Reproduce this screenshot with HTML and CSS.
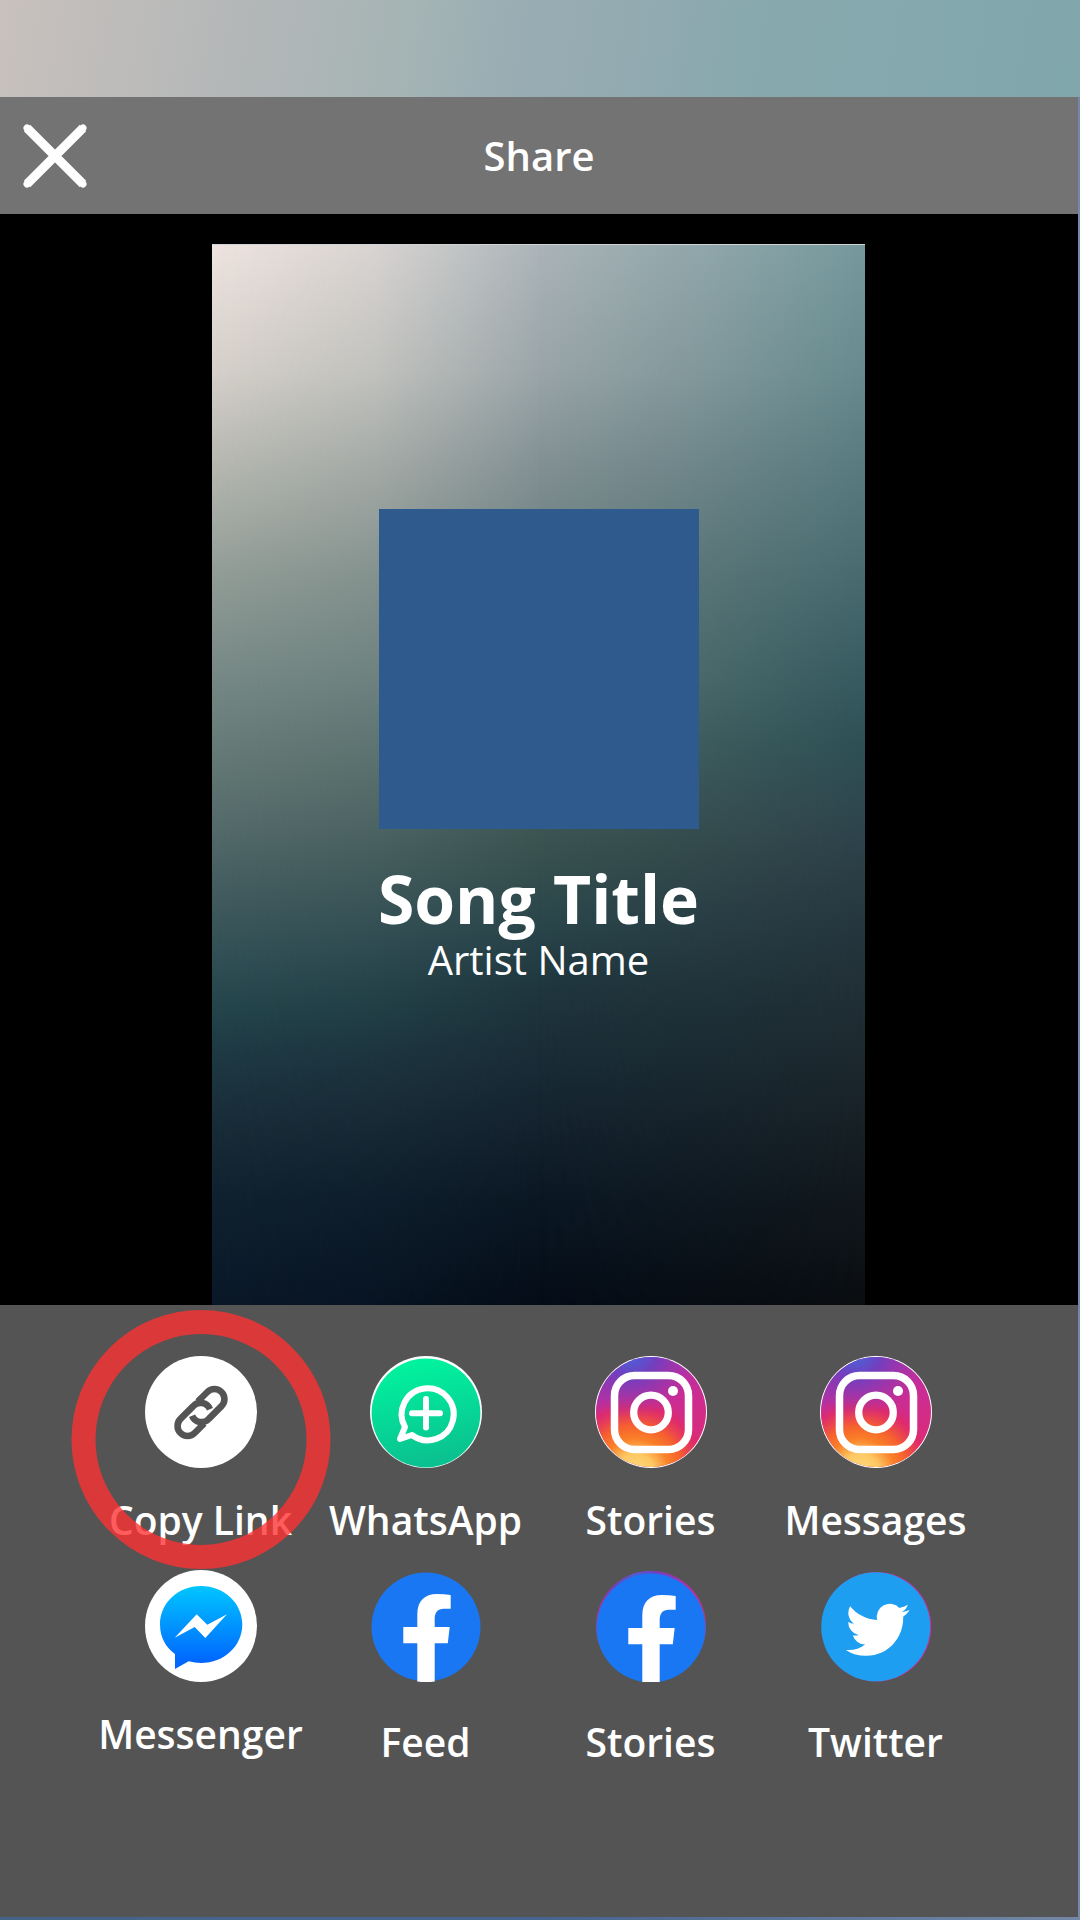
FILE: index.html
```html
<!DOCTYPE html>
<html lang="en">
<head>
<meta charset="utf-8">
<meta name="viewport" content="width=device-width, initial-scale=1">
<title>Share</title>
<link rel="stylesheet" href="styles.css">
</head>
<body>
<svg class="defs" aria-hidden="true">
  <defs>
    <linearGradient id="green" x1="0" y1="0" x2="0.2" y2="1"><stop offset="0" stop-color="#00f8a0"/><stop offset="1" stop-color="#0ac290"/></linearGradient>
    <linearGradient id="sky" x1="0" y1="0" x2="0" y2="1"><stop offset="0" stop-color="#00c6ff"/><stop offset="0.9" stop-color="#0068ff"/></linearGradient>
    <linearGradient id="pink" x1="0.3" y1="0" x2="0.7" y2="1"><stop offset="0" stop-color="#a033b4"/><stop offset="0.5" stop-color="#cb2c93"/><stop offset="1" stop-color="#e02c70"/></linearGradient>
    <radialGradient id="warm" gradientUnits="userSpaceOnUse" cx="40" cy="118" r="84"><stop offset="0" stop-color="#ffdc80"/><stop offset="0.24" stop-color="#fdc863"/><stop offset="0.42" stop-color="#fa8028"/><stop offset="0.58" stop-color="#f6602f"/><stop offset="0.8" stop-color="#e22a66" stop-opacity="0.8"/><stop offset="1" stop-color="#cb2c93" stop-opacity="0"/></radialGradient>
    <radialGradient id="cool" gradientUnits="userSpaceOnUse" cx="36" cy="-4" r="66"><stop offset="0" stop-color="#3f6be0"/><stop offset="0.4" stop-color="#6a40c0" stop-opacity="0.85"/><stop offset="1" stop-color="#9a36a8" stop-opacity="0"/></radialGradient>
    <symbol id="instagram" viewBox="0 0 112 112">
      <circle cx="56" cy="56" r="56" fill="#fff"/>
      <circle cx="56" cy="56" r="55" fill="url(#pink)"/>
      <circle cx="56" cy="56" r="55" fill="url(#warm)"/>
      <circle cx="56" cy="56" r="55" fill="url(#cool)"/>
      <rect x="19.5" y="19.5" width="74" height="74" rx="20" fill="none" stroke="#fff" stroke-width="7.5"/>
      <circle cx="56" cy="56.5" r="17.3" fill="none" stroke="#fff" stroke-width="7.3"/>
      <circle cx="78" cy="35" r="5" fill="#fff"/>
    </symbol>
    <symbol id="facebook" viewBox="0 0 112 112">
      <circle cx="56" cy="57" r="54.5" fill="#1977f3"/>
      <path d="M47.3 111.5V73.3H33.3V57H47.3V44.5C47.3 31 54.5 24 67 24Q74 24 80.7 25V38.7H74C67.5 38.7 64.7 42.5 64.7 49V57H79.7L77.8 73.3H64.7V111.5Q56 112.5 47.3 111.5Z" fill="#fff"/>
    </symbol>
  </defs>
</svg>
<div class="screen">
  <header class="bar">
    <button class="close" type="button" aria-label="Close">
      <svg viewBox="0 0 64 64"><path d="M4 4L60 60M60 4L4 60" stroke="#fff" stroke-width="9"/><path d="M4 4L60 60M60 4L4 60" stroke="#fff" stroke-width="7" stroke-linecap="round"/></svg>
    </button>
    <h1 class="heading">Share</h1>
  </header>
  <main class="preview">
    <article class="card">
      <div class="cover"></div>
      <h2 class="song">Song Title</h2>
      <p class="artist">Artist Name</p>
    </article>
  </main>
  <section class="panel" aria-label="Share to">
    <button class="target highlighted" type="button">
      <svg class="icon" viewBox="0 0 112 112">
        <circle cx="56" cy="56" r="56" fill="#fff"/>
        <g fill="none" stroke="#545454" stroke-width="6.6" transform="translate(56 56.5) rotate(-45)">
          <path d="M-8.600 -4A10 10 0 0 0 1 10H19A10 10 0 0 0 19 -10H5.500"/>
          <path d="M8.600 4A10 10 0 0 0 -1 -10H-19A10 10 0 0 0 -19 10H-5.500"/>
        </g>
      </svg>
      <span>Copy Link</span>
    </button>
    <button class="target" type="button">
      <svg class="icon" viewBox="0 0 112 112">
        <circle cx="56" cy="56" r="56" fill="#fff"/>
        <circle cx="56" cy="57" r="54.4" fill="url(#green)"/>
        <path d="M35 71A26 26 0 1 1 42 79L30 83Z" fill="none" stroke="#fff" stroke-width="6" stroke-linejoin="round"/>
        <path d="M42 57.3H70M56 43V71.500" stroke="#fff" stroke-width="6" stroke-linecap="round"/>
      </svg>
      <span>WhatsApp</span>
    </button>
    <button class="target" type="button">
      <svg class="icon"><use href="#instagram"/></svg>
      <span>Stories</span>
    </button>
    <button class="target" type="button">
      <svg class="icon"><use href="#instagram"/></svg>
      <span>Messages</span>
    </button>
    <button class="target" type="button">
      <svg class="icon" viewBox="0 0 112 112">
        <circle cx="56" cy="56" r="56" fill="#fff"/>
        <path d="M56 16C79 16 97.300 33 97.300 54.500S79 93 56 93Q50 93 43.700 91.300L30 99V84C20.500 77 15 67 15 54.500C15 33 33 16 56 16Z" fill="url(#sky)"/>
        <path d="M29.700 67.700L51.700 44.300L62.300 54.700L82 44.300L60.300 68L49.700 57Z" fill="#fff"/>
      </svg>
      <span>Messenger</span>
    </button>
    <button class="target low" type="button">
      <svg class="icon"><use href="#facebook"/></svg>
      <span>Feed</span>
    </button>
    <button class="target low" type="button">
      <svg class="icon" viewBox="0 0 112 112">
        <circle cx="56" cy="56" r="55" fill="url(#pink)"/>
        <circle cx="56" cy="56" r="55" fill="url(#cool)"/>
        <use href="#facebook" y="1" width="112" height="112"/>
      </svg>
      <span>Stories</span>
    </button>
    <button class="target low" type="button">
      <svg class="icon" viewBox="0 0 112 112">
        <circle cx="56.500" cy="56.700" r="54.800" fill="#c5309c"/>
        <circle cx="55.700" cy="56.800" r="54.500" fill="#1d9ef1"/>
        <path transform="translate(25.700 27.800) scale(2.667)" d="M23.953 4.570a10 10 0 01-2.825.775 4.958 4.958 0 002.163-2.723c-.951.555-2.005.959-3.127 1.184a4.920 4.920 0 00-8.384 4.482C7.690 8.095 4.067 6.130 1.640 3.162a4.822 4.822 0 00-.666 2.475c0 1.710.870 3.213 2.188 4.096a4.904 4.904 0 01-2.228-.616v.060a4.923 4.923 0 003.946 4.827 4.996 4.996 0 01-2.212.085 4.936 4.936 0 004.604 3.417 9.867 9.867 0 01-6.102 2.105c-.390 0-.779-.023-1.170-.067a13.995 13.995 0 007.557 2.209c9.053 0 13.998-7.496 13.998-13.985 0-.210 0-.420-.015-.630A9.935 9.935 0 0024 4.590z" fill="#fff"/>
      </svg>
      <span>Twitter</span>
    </button>
  </section>
</div>
</body>
</html>
```
FILE: styles.css
```css
*,
*::before,
*::after {
  box-sizing: border-box;
}

body {
  margin: 0;
  font-family: "Open Sans", "Noto Sans", sans-serif;
  color: #fff;
  background: #000;
}

button {
  padding: 0;
  border: 0;
  background: none;
  color: inherit;
  font: inherit;
}

.defs {
  position: absolute;
  width: 0;
  height: 0;
}

.screen {
  display: flex;
  flex-direction: column;
  min-height: 100vh;
  padding: 97px 2px 3px 0;
  background:
    linear-gradient(100deg, #c8c1bd, #b4b7b8 22%, #a5b4b4 38%, #9aaeb4 46%, #93aab1 58%, #87a9ae 70%, #80a7ac) top / 100% 97px no-repeat,
    linear-gradient(90deg, #46648a, #46648f 50%, #7488a6);
}

.bar {
  display: grid;
  grid-template-columns: 64px 1fr 64px;
  align-items: center;
  height: 117px;
  padding: 0 23px;
  background: #737373;
}

.close {
  height: 64px;
}

.close svg {
  display: block;
  width: 64px;
  height: 64px;
}

.heading {
  margin: 0;
  font-size: 40px;
  line-height: 48px;
  font-weight: 600;
  text-align: center;
}

.preview {
  display: flex;
  justify-content: center;
  padding: 30px 1px 0 0;
  background: #000;
}

/* Three vertical colour ramps, blended from left to right */
.card {
  position: relative;
  isolation: isolate;
  display: flex;
  flex-direction: column;
  align-items: center;
  width: 653px;
  max-width: 100%;
  aspect-ratio: 653 / 1061;
  padding-top: 264px;
  border-top: 1px solid #cfd3d5;
  background: linear-gradient(#efe4df, #d5d0c9 12%, #b5b7b0 21%, #929d97 31%, #768885 41%, #607672 50%, #576d6d 54%, #435c5f 61%, #325056 67%, #24454b 72%, #1f3a44 76%, #172b37 84%, #10212f 90%, #0a1828);
}

.card::before,
.card::after {
  content: "";
  position: absolute;
  inset: 0;
  z-index: -1;
}

.card::before {
  background: linear-gradient(#abb4b8, #9aa5a8 12%, #829093 21%, #6a7e7e 31%, #5c7573 41%, #486261 49%, #39524f 57%, #2a464b 64%, #1f363e 70%, #192c36 77%, #14222e 83%, #0b1824 90%, #040c17);
  mask-image: linear-gradient(90deg, transparent, rgba(0, 0, 0, 0.34) 25%, #000 50%);
}

.card::after {
  background: linear-gradient(#75989c, #678a8e 12%, #587a7f 21%, #486b70 31%, #355a5f 41%, #2e5055 47%, #2e444c 55%, #26363e 64%, #1c282e 77%, #11181d 90%, #0a0d10);
  mask-image: linear-gradient(90deg, transparent 50%, #000);
}

.cover {
  width: 320px;
  height: 320px;
  margin-bottom: 31px;
  background: #2e5a8d;
}

.song {
  margin: 0;
  font-size: 66px;
  line-height: 76px;
  font-weight: 700;
}

.artist {
  margin: 0;
  font-size: 40px;
  line-height: 48px;
}

.panel {
  flex: 1;
  display: grid;
  grid-template-columns: repeat(4, 1fr);
  align-content: start;
  row-gap: 26px;
  padding: 51px 90px 51px 88px;
  background: #545454;
}

.target {
  display: flex;
  flex-direction: column;
  align-items: center;
  gap: 28px;
  font-size: 39px;
  line-height: 48px;
  font-weight: 600;
  white-space: nowrap;
}

.low {
  gap: 36px;
}

.icon {
  width: 112px;
  height: 112px;
}

.highlighted {
  position: relative;
}

/* Ring that marks the suggested option */
.highlighted::after {
  content: "";
  position: absolute;
  top: -46px;
  left: 50%;
  width: 259px;
  height: 259px;
  border: 24px solid #ff3131;
  border-radius: 50%;
  opacity: 0.79;
  transform: translateX(-50%);
}
```
